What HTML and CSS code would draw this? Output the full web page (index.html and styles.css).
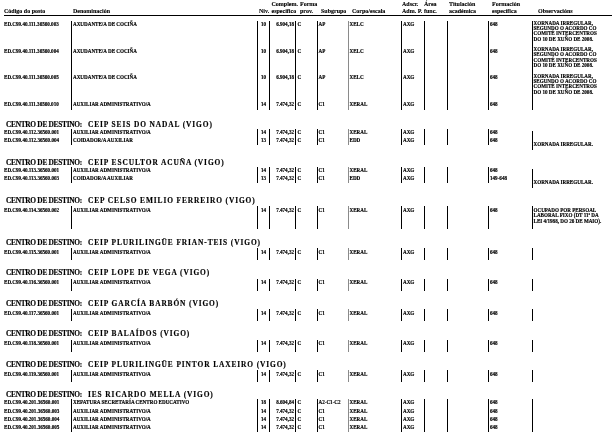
FILE: index.html
```html
<!DOCTYPE html>
<html lang="gl">
<head>
<meta charset="utf-8">
<title>Relación de postos</title>
<link rel="stylesheet" href="styles.css">
</head>
<body>
<div class="page">
  <div class="cols head">
    <div class="h hc">Código do posto</div>
    <div class="h hd">Denominación</div>
    <div class="h hn">Niv.</div>
    <div class="h hm">Complem.<br>específico</div>
    <div class="h hf">Forma<br>prov.</div>
    <div class="h hs">Subgrupo</div>
    <div class="h hk">Corpo/escala</div>
    <div class="h ha">Adscr.<br>Adm. P.</div>
    <div class="h hr">Área<br>func.</div>
    <div class="h ht">Titulación<br>académica</div>
    <div class="h he">Formación<br>específica</div>
    <div class="h ho">Observacións</div>
  </div>

  <div class="cols rows top">
    <div class="c">ED.C99.40.111.36560.003</div><div class="d">AXUDANTE/A DE COCIÑA</div><div class="n">10</div><div class="m">6.904,18</div><div class="f">C</div><div class="s">AP</div><div class="k">XELC</div><div class="a">AXG</div><div class="r"></div><div class="t"></div><div class="e">648</div><div class="o">XORNADA IRREGULAR,<br>SEGUNDO O ACORDO CO<br>COMITÉ INTERCENTROS<br>DO 10 DE XUÑO DE 2008.</div>
    <div class="c">ED.C99.40.111.36560.004</div><div class="d">AXUDANTE/A DE COCIÑA</div><div class="n">10</div><div class="m">6.904,18</div><div class="f">C</div><div class="s">AP</div><div class="k">XELC</div><div class="a">AXG</div><div class="r"></div><div class="t"></div><div class="e">648</div><div class="o">XORNADA IRREGULAR,<br>SEGUNDO O ACORDO CO<br>COMITÉ INTERCENTROS<br>DO 10 DE XUÑO DE 2008.</div>
    <div class="c">ED.C99.40.111.36560.005</div><div class="d">AXUDANTE/A DE COCIÑA</div><div class="n">10</div><div class="m">6.904,18</div><div class="f">C</div><div class="s">AP</div><div class="k">XELC</div><div class="a">AXG</div><div class="r"></div><div class="t"></div><div class="e">648</div><div class="o">XORNADA IRREGULAR,<br>SEGUNDO O ACORDO CO<br>COMITÉ INTERCENTROS<br>DO 10 DE XUÑO DE 2008.</div>
    <div class="c">ED.C99.40.111.36560.010</div><div class="d">AUXILIAR ADMINISTRATIVO/A</div><div class="n">14</div><div class="m">7.474,32</div><div class="f">C</div><div class="s">C1</div><div class="k">XERAL</div><div class="a">AXG</div><div class="r"></div><div class="t"></div><div class="e">648</div><div class="o"></div>
  </div>

  <section class="grp mt-first">
    <div class="dest"><span class="lbl">CENTRO DE DESTINO:</span><span class="nm">CEIP SEIS DO NADAL (VIGO)</span></div>
    <div class="cols rows multi">
      <div class="c">ED.C99.40.112.36560.001</div><div class="d">AUXILIAR ADMINISTRATIVO/A</div><div class="n">14</div><div class="m">7.474,32</div><div class="f">C</div><div class="s">C1</div><div class="k">XERAL</div><div class="a">AXG</div><div class="r"></div><div class="t"></div><div class="e">648</div><div class="o span2">XORNADA IRREGULAR.</div>
      <div class="c">ED.C99.40.112.36560.004</div><div class="d">COIDADOR/A AUXILIAR</div><div class="n">13</div><div class="m">7.474,32</div><div class="f">C</div><div class="s">C1</div><div class="k">EDD</div><div class="a">AXG</div><div class="r"></div><div class="t"></div><div class="e">648</div>
    </div>
  </section>

  <section class="grp mt-multi">
    <div class="dest"><span class="lbl">CENTRO DE DESTINO:</span><span class="nm">CEIP ESCULTOR ACUÑA (VIGO)</span></div>
    <div class="cols rows multi">
      <div class="c">ED.C99.40.113.36560.001</div><div class="d">AUXILIAR ADMINISTRATIVO/A</div><div class="n">14</div><div class="m">7.474,32</div><div class="f">C</div><div class="s">C1</div><div class="k">XERAL</div><div class="a">AXG</div><div class="r"></div><div class="t"></div><div class="e">648</div><div class="o span2">XORNADA IRREGULAR.</div>
      <div class="c">ED.C99.40.113.36560.003</div><div class="d">COIDADOR/A AUXILIAR</div><div class="n">13</div><div class="m">7.474,32</div><div class="f">C</div><div class="s">C1</div><div class="k">EDD</div><div class="a">AXG</div><div class="r"></div><div class="t"></div><div class="e">149-648</div>
    </div>
  </section>

  <section class="grp mt-multi">
    <div class="dest"><span class="lbl">CENTRO DE DESTINO:</span><span class="nm">CEP CELSO EMILIO FERREIRO (VIGO)</span></div>
    <div class="cols rows single tall">
      <div class="c">ED.C99.40.114.36560.002</div><div class="d">AUXILIAR ADMINISTRATIVO/A</div><div class="n">14</div><div class="m">7.474,32</div><div class="f">C</div><div class="s">C1</div><div class="k">XERAL</div><div class="a">AXG</div><div class="r"></div><div class="t"></div><div class="e">648</div><div class="o">OCUPADO POR PERSOAL<br>LABORAL FIXO (DT 11ª DA<br>LEI 4/1988, DO 26 DE MAIO).</div>
    </div>
  </section>

  <section class="grp mt-tall">
    <div class="dest"><span class="lbl">CENTRO DE DESTINO:</span><span class="nm">CEIP PLURILINGÜE FRIAN-TEIS (VIGO)</span></div>
    <div class="cols rows single">
      <div class="c">ED.C99.40.115.36560.001</div><div class="d">AUXILIAR ADMINISTRATIVO/A</div><div class="n">14</div><div class="m">7.474,32</div><div class="f">C</div><div class="s">C1</div><div class="k">XERAL</div><div class="a">AXG</div><div class="r"></div><div class="t"></div><div class="e">648</div><div class="o"></div>
    </div>
  </section>

  <section class="grp mt-single">
    <div class="dest"><span class="lbl">CENTRO DE DESTINO:</span><span class="nm">CEIP LOPE DE VEGA (VIGO)</span></div>
    <div class="cols rows single">
      <div class="c">ED.C99.40.116.36560.001</div><div class="d">AUXILIAR ADMINISTRATIVO/A</div><div class="n">14</div><div class="m">7.474,32</div><div class="f">C</div><div class="s">C1</div><div class="k">XERAL</div><div class="a">AXG</div><div class="r"></div><div class="t"></div><div class="e">648</div><div class="o"></div>
    </div>
  </section>

  <section class="grp mt-single">
    <div class="dest"><span class="lbl">CENTRO DE DESTINO:</span><span class="nm">CEIP GARCÍA BARBÓN (VIGO)</span></div>
    <div class="cols rows single">
      <div class="c">ED.C99.40.117.36560.001</div><div class="d">AUXILIAR ADMINISTRATIVO/A</div><div class="n">14</div><div class="m">7.474,32</div><div class="f">C</div><div class="s">C1</div><div class="k">XERAL</div><div class="a">AXG</div><div class="r"></div><div class="t"></div><div class="e">648</div><div class="o"></div>
    </div>
  </section>

  <section class="grp mt-single">
    <div class="dest"><span class="lbl">CENTRO DE DESTINO:</span><span class="nm">CEIP BALAÍDOS (VIGO)</span></div>
    <div class="cols rows single">
      <div class="c">ED.C99.40.118.36560.001</div><div class="d">AUXILIAR ADMINISTRATIVO/A</div><div class="n">14</div><div class="m">7.474,32</div><div class="f">C</div><div class="s">C1</div><div class="k">XERAL</div><div class="a">AXG</div><div class="r"></div><div class="t"></div><div class="e">648</div><div class="o"></div>
    </div>
  </section>

  <section class="grp mt-single">
    <div class="dest"><span class="lbl">CENTRO DE DESTINO:</span><span class="nm">CEIP PLURILINGÜE PINTOR LAXEIRO (VIGO)</span></div>
    <div class="cols rows single">
      <div class="c">ED.C99.40.119.36560.001</div><div class="d">AUXILIAR ADMINISTRATIVO/A</div><div class="n">14</div><div class="m">7.474,32</div><div class="f">C</div><div class="s">C1</div><div class="k">XERAL</div><div class="a">AXG</div><div class="r"></div><div class="t"></div><div class="e">648</div><div class="o"></div>
    </div>
  </section>

  <section class="grp mt-single">
    <div class="dest"><span class="lbl">CENTRO DE DESTINO:</span><span class="nm">IES RICARDO MELLA (VIGO)</span></div>
    <div class="cols rows quad">
      <div class="c">ED.C99.40.201.36560.001</div><div class="d">XEFATURA SECRETARÍA CENTRO EDUCATIVO</div><div class="n">18</div><div class="m">8.604,84</div><div class="f">C</div><div class="s">A2-C1-C2</div><div class="k">XERAL</div><div class="a">AXG</div><div class="r"></div><div class="t"></div><div class="e">648</div><div class="o"></div>
      <div class="c">ED.C99.40.201.36560.003</div><div class="d">AUXILIAR ADMINISTRATIVO/A</div><div class="n">14</div><div class="m">7.474,32</div><div class="f">C</div><div class="s">C1</div><div class="k">XERAL</div><div class="a">AXG</div><div class="r"></div><div class="t"></div><div class="e">648</div><div class="o"></div>
      <div class="c">ED.C99.40.201.36560.004</div><div class="d">AUXILIAR ADMINISTRATIVO/A</div><div class="n">14</div><div class="m">7.474,32</div><div class="f">C</div><div class="s">C1</div><div class="k">XERAL</div><div class="a">AXG</div><div class="r"></div><div class="t"></div><div class="e">648</div><div class="o"></div>
      <div class="c">ED.C99.40.201.36560.005</div><div class="d">AUXILIAR ADMINISTRATIVO/A</div><div class="n">14</div><div class="m">7.474,32</div><div class="f">C</div><div class="s">C1</div><div class="k">XERAL</div><div class="a">AXG</div><div class="r"></div><div class="t"></div><div class="e">648</div><div class="o"></div>
    </div>
  </section>
</div>
</body>
</html>
```

FILE: styles.css
```css
* { box-sizing: border-box; margin: 0; padding: 0; }

html, body { background: #fff; }

body {
  margin: 0;
  color: #000;
  font-family: "Liberation Serif", "Times New Roman", serif;
  font-weight: bold;
}

.page {
  width: 616px;
  height: 439px;
  overflow: hidden;
  padding: 1px 4px 0 4px;
  background: #fff;
  filter: grayscale(1);
}

.cols {
  display: grid;
  grid-template-columns: 67px 186px 12px 26px 22px 31px 53px 23px 23px 41px 44px 80px;
}

/* header */
.head {
  border-bottom: 1px solid #000;
}
.h {
  height: 14px;
  font-size: 6px;
  line-height: 7px;
  white-space: nowrap;
  display: flex;
  flex-direction: column;
  justify-content: flex-end;
  -webkit-text-stroke: 0.1px #000;
}
.hd { padding-left: 2px; }
.hn { padding-left: 2px; }
.hm { padding-left: 2.5px; }
.hf { padding-left: 5px; }
.hs { padding-left: 4px; }
.hk { padding-left: 4px; }
.ha { padding-left: 1px; }
.hr { padding-left: 0; }
.ht { padding-left: 2px; }
.he { padding-left: 4px; }
.ho { padding-left: 6px; }

/* data rows */
.rows > div {
  font-size: 5.1px;
  line-height: 5.5px;
  white-space: nowrap;
  border-left: 1px solid #000;
  padding-top: var(--pt);
  -webkit-text-stroke: 0.15px #000;
}
.rows > .c { border-left: none; }
.rows > .d { padding-left: 1px; }
.rows > .n { text-align: center; border-left-width: 1.3px; }
.rows > .m { text-align: right; padding-right: 1px; border-left-width: 1.3px; }
.rows > .f { padding-left: 1.5px; }
.rows > .s { padding-left: 0.5px; }
.rows > .k { border-left: 1.6px solid #8a8a8a; padding-left: 0.5px; }
.rows > .a { padding-left: 1px; }
.rows > .e { padding-left: 1px; }
.rows > .o {
  border-left: 1.5px solid #000;
  padding-left: 0.5px;
  line-height: 5.4px;
  padding-top: var(--po);
}

.top {
  margin-top: 4.5px;
  grid-template-rows: 26.5px 26.5px 26.5px 10px;
  --pt: 1.75px;
  --po: 0px;
}

.multi {
  grid-auto-rows: 8px;
  --pt: 1.25px;
  --po: 11.25px;
}
.rows > .span2 {
  grid-row: span 2;
  margin-top: 2.5px;
  margin-bottom: -5.5px;
}

.single {
  margin-top: 1.5px;
  grid-auto-rows: 12px;
  --pt: 1.75px;
  --po: 1.75px;
}
.single.tall {
  grid-auto-rows: 23px;
  --po: 2px;
}

.quad {
  grid-auto-rows: 8.3px;
  --pt: 1.4px;
  --po: 1.4px;
}

/* centre headings */
.dest {
  display: flex;
  height: 9px;
  line-height: 9px;
  font-size: 7.4px;
  padding-left: 2px;
  white-space: nowrap;
  -webkit-text-stroke: 0.15px #000;
}
.lbl {
  flex: none;
  width: 82px;
  font-size: 7.4px;
  letter-spacing: -0.3px;
}
.nm {
  flex: none;
  letter-spacing: 0.9px;
}

.mt-first { margin-top: 9.5px; }
.mt-multi { margin-top: 13px; }
.mt-tall { margin-top: 8.5px; }
.mt-single { margin-top: 8px; }
```
